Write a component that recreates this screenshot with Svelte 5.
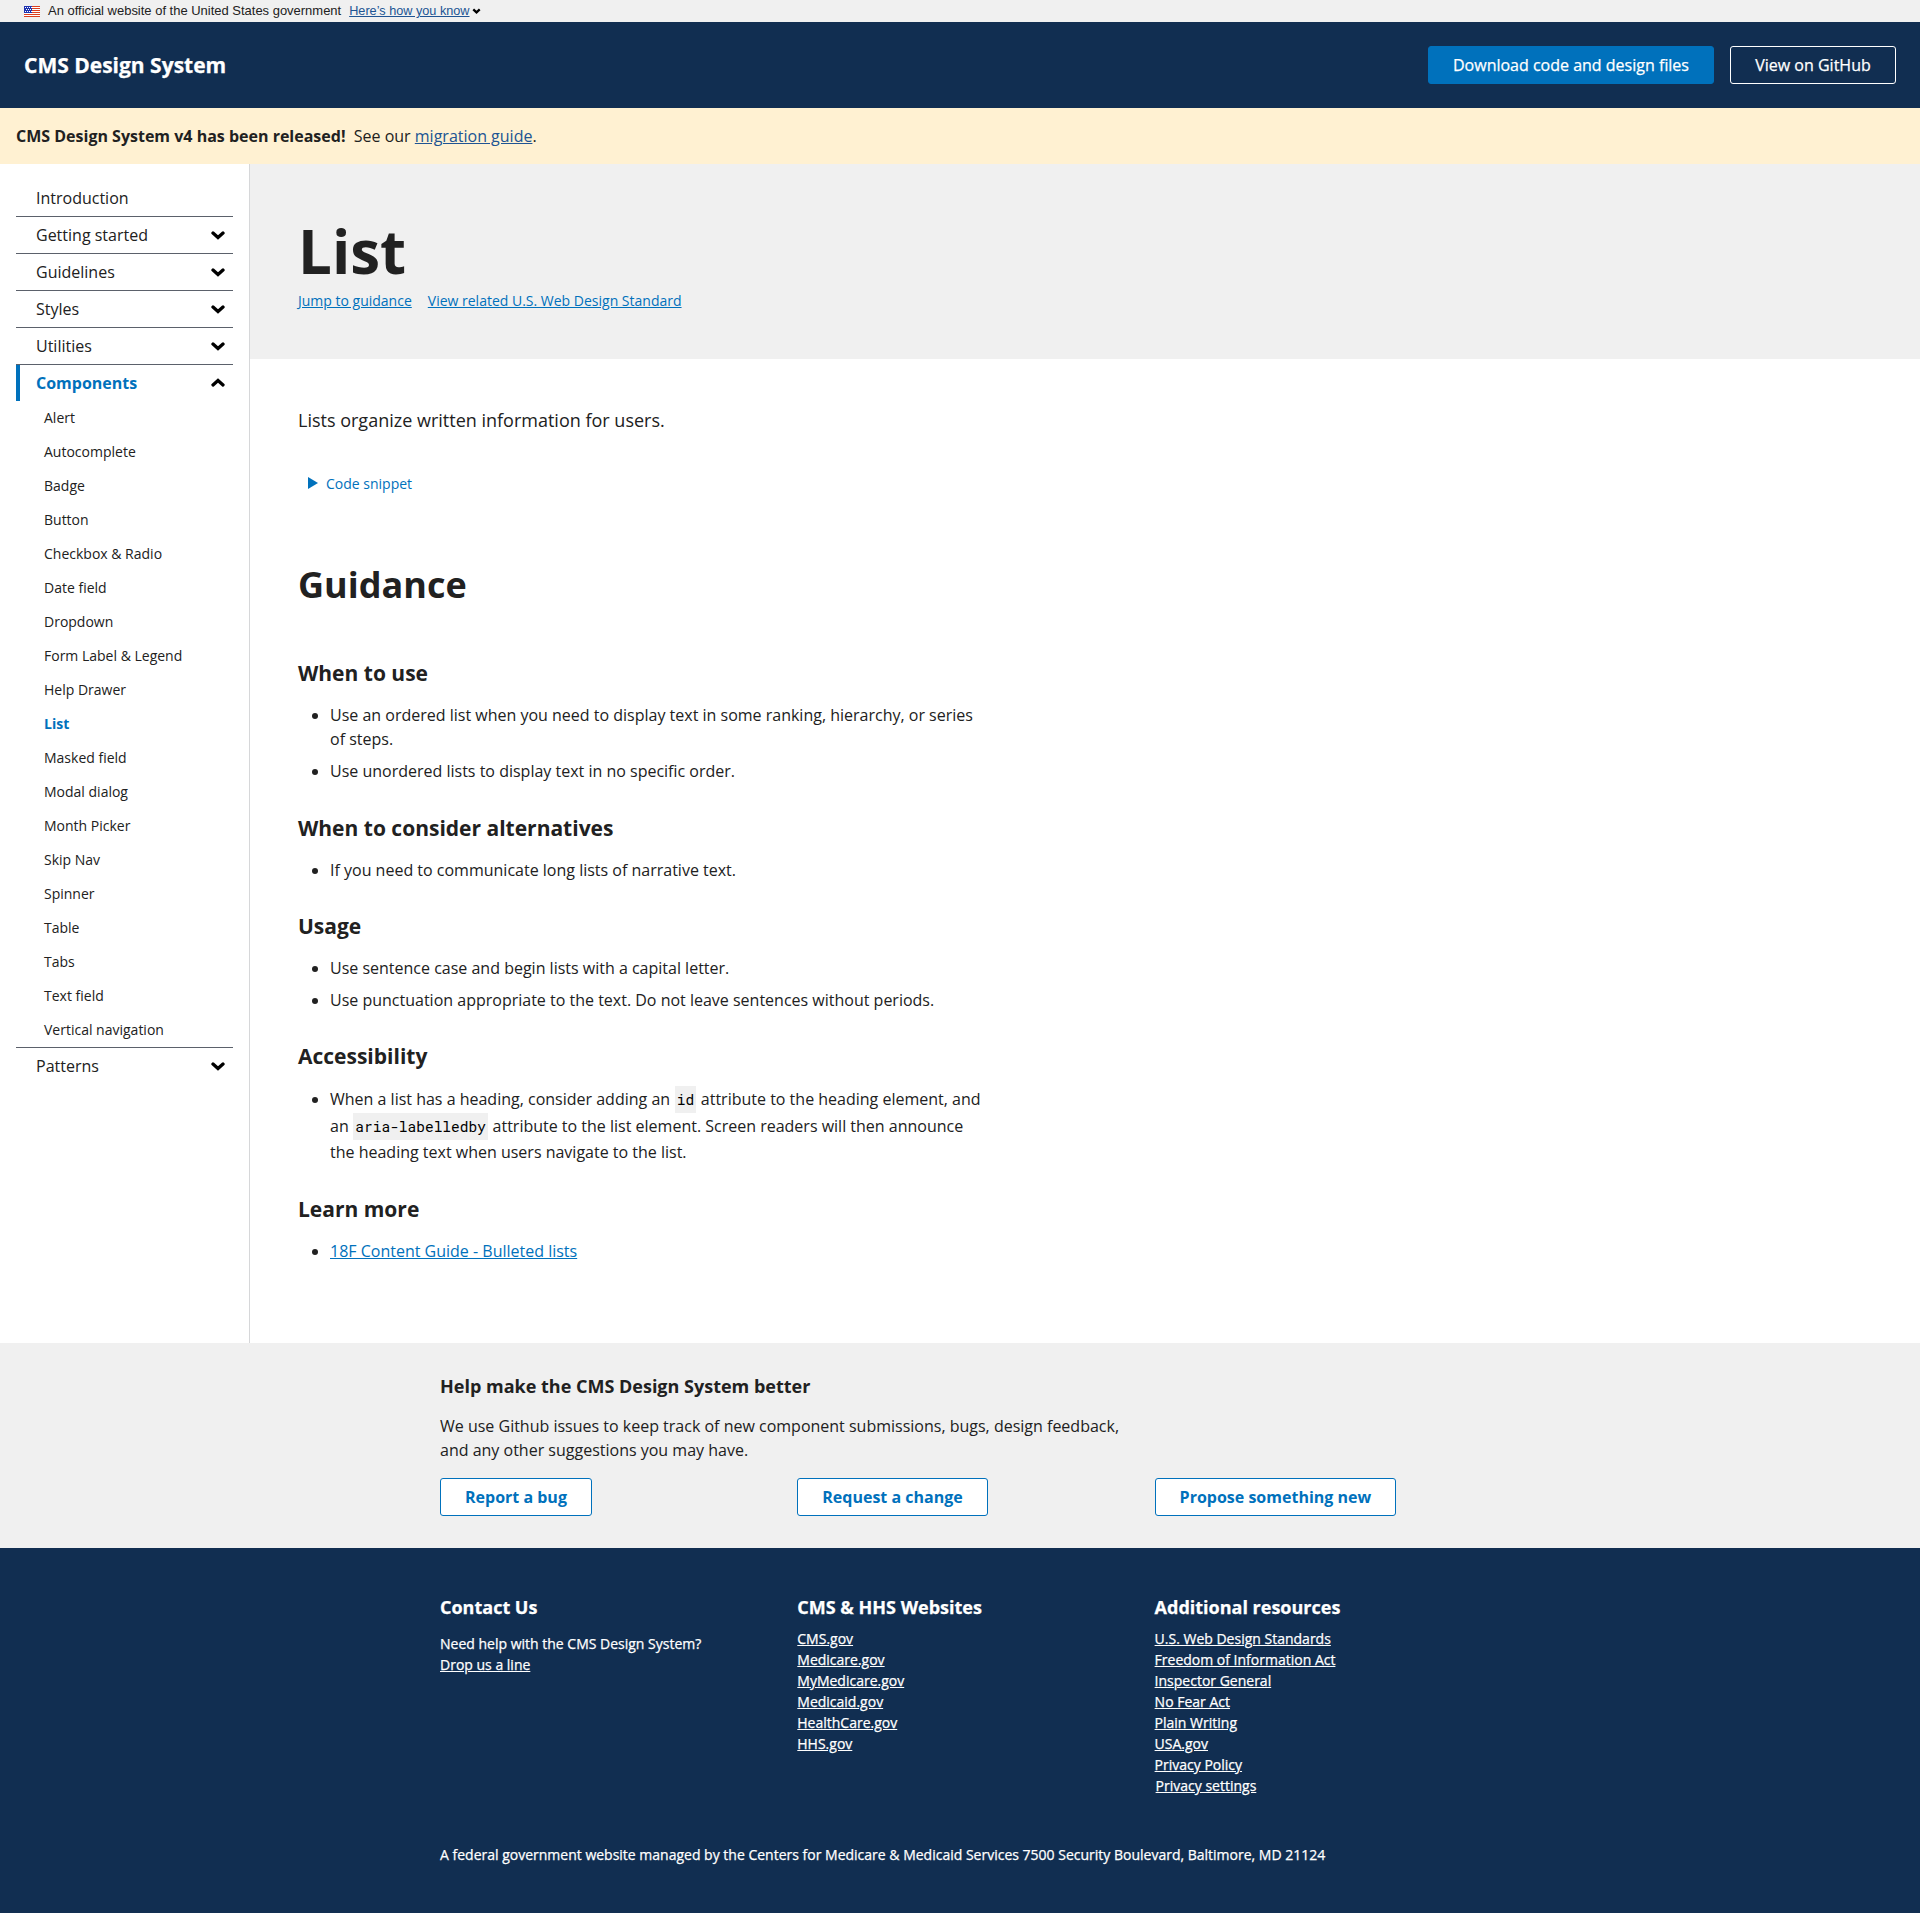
<script>
  const before = ['Getting started', 'Guidelines', 'Styles', 'Utilities'];
  const components = [
    'Alert', 'Autocomplete', 'Badge', 'Button', 'Checkbox & Radio', 'Date field',
    'Dropdown', 'Form Label & Legend', 'Help Drawer', 'List', 'Masked field',
    'Modal dialog', 'Month Picker', 'Skip Nav', 'Spinner', 'Table', 'Tabs',
    'Text field', 'Vertical navigation'
  ];
  const cms = ['CMS.gov', 'Medicare.gov', 'MyMedicare.gov', 'Medicaid.gov', 'HealthCare.gov', 'HHS.gov'];
  const resources = [
    'U.S. Web Design Standards', 'Freedom of Information Act', 'Inspector General',
    'No Fear Act', 'Plain Writing', 'USA.gov', 'Privacy Policy'
  ];
</script>

{#snippet chevron(open)}
  <svg class="chevron" class:open viewBox="0 0 14 9" aria-hidden="true">
    <path d="M2 2.1 7 6.6 12 2.1" />
  </svg>
{/snippet}

<div class="page">
  <div class="gov">
    <svg class="flag" viewBox="0 0 16 11" aria-hidden="true">
      <rect width="16" height="11" fill="#fff" />
      <path d="M0 .5h16M0 2.5h16M0 4.5h16M0 6.5h16M0 8.5h16M0 10.5h16" stroke="#db3e1f" />
      <rect width="8" height="7" fill="#1e33b1" />
      <path d="M1 1.5h7M2 3.5h6M1 5.5h7" stroke="#fff" stroke-dasharray="1 1" />
    </svg>
    <span class="official">An official website of the United States government</span>
    <a class="know" href="#top">Here’s how you know</a>
    <svg class="tiny" viewBox="0 0 14 9" aria-hidden="true"><path d="M2 2 7 6.6 12 2" /></svg>
  </div>

  <header>
    <div class="brand">CMS Design System</div>
    <div class="actions">
      <a class="btn primary" href="#top">Download code and design files</a>
      <a class="btn outline" href="#top">View on GitHub</a>
    </div>
  </header>

  <div class="notice">
    <b>CMS Design System v4 has been released!</b>&nbsp; See our <a href="#top">migration guide</a>.
  </div>

  <div class="body">
    <nav>
      <div class="item first"><span>Introduction</span></div>
      {#each before as label}
        <div class="item"><span>{label}</span>{@render chevron(false)}</div>
      {/each}
      <div class="item current"><span>Components</span>{@render chevron(true)}</div>
      <ul>
        {#each components as label}
          <li class:selected={label === 'List'}>{label}</li>
        {/each}
      </ul>
      <div class="item"><span>Patterns</span>{@render chevron(false)}</div>
    </nav>

    <main>
      <div class="hero">
        <h1>List</h1>
        <div class="jump">
          <a href="#top">Jump to guidance</a>
          <a href="#top">View related U.S. Web Design Standard</a>
        </div>
      </div>
      <article>
        <p class="lead">Lists organize written information for users.</p>
        <div class="snippet">
          <svg viewBox="0 0 10 12" aria-hidden="true"><path d="M0 0 10 6 0 12z" /></svg>
          <span>Code snippet</span>
        </div>
        <h2>Guidance</h2>
        <h3>When to use</h3>
        <ul>
          <li>Use an ordered list when you need to display text in some ranking, hierarchy, or series of steps.</li>
          <li>Use unordered lists to display text in no specific order.</li>
        </ul>
        <h3>When to consider alternatives</h3>
        <ul><li>If you need to communicate long lists of narrative text.</li></ul>
        <h3>Usage</h3>
        <ul>
          <li>Use sentence case and begin lists with a capital letter.</li>
          <li>Use punctuation appropriate to the text. Do not leave sentences without periods.</li>
        </ul>
        <h3>Accessibility</h3>
        <ul class="roomy">
          <li>When a list has a heading, consider adding an <code>id</code> attribute to the heading element, and an <code>aria-labelledby</code> attribute to the list element. Screen readers will then announce the heading text when users navigate to the list.</li>
        </ul>
        <h3>Learn more</h3>
        <ul><li><a href="#top">18F Content Guide - Bulleted lists</a></li></ul>
      </article>
    </main>
  </div>

  <section class="feedback">
    <div class="wrap">
      <h4>Help make the CMS Design System better</h4>
      <p>We use Github issues to keep track of new component submissions, bugs, design feedback, and any other suggestions you may have.</p>
      <div class="cols">
        <div><a class="btn ghost" href="#top">Report a bug</a></div>
        <div><a class="btn ghost" href="#top">Request a change</a></div>
        <div><a class="btn ghost" href="#top">Propose something new</a></div>
      </div>
    </div>
  </section>

  <footer>
    <div class="wrap">
      <div class="cols">
        <div class="contact">
          <h4>Contact Us</h4>
          <p>Need help with the CMS Design System?</p>
          <a href="#top">Drop us a line</a>
        </div>
        <div>
          <h4>CMS &amp; HHS Websites</h4>
          {#each cms as label}<a href="#top">{label}</a>{/each}
        </div>
        <div>
          <h4>Additional resources</h4>
          {#each resources as label}<a href="#top">{label}</a>{/each}
          <a class="settings" href="#top">Privacy settings</a>
        </div>
      </div>
      <p class="managed">A federal government website managed by the Centers for Medicare &amp; Medicaid Services 7500 Security Boulevard, Baltimore, MD 21124</p>
    </div>
  </footer>
</div>

<style>
  .page {
    width: 100%;
    min-height: 1913px;
    display: flex;
    flex-direction: column;
    background: #fff;
    color: #212121;
    font: 16px/24px 'Open Sans', sans-serif;
  }
  h1, h2, h3, h4, p, ul { margin: 0; padding: 0; }
  a { color: #0071bc; text-decoration: underline; }

  .gov {
    display: flex;
    align-items: center;
    height: 22px;
    padding: 0 24px;
    background: #f0f0f0;
    font: 12.97px/22px 'Liberation Sans', sans-serif;
  }
  .flag { width: 16px; height: 11px; margin: 1px 8px 0 0; shape-rendering: crispEdges; }
  .official { margin-right: 8px; }
  .know { color: #205493; font-size: 12.7px; }
  .tiny { width: 9px; height: 6px; margin: 0 0 0 2px; fill: none; stroke: #000; stroke-width: 3.6; }

  header {
    display: flex;
    align-items: center;
    justify-content: space-between;
    height: 86px;
    padding: 0 24px;
    background: #112e51;
  }
  .brand { color: #fff; font-size: 21px; font-weight: 700; }
  .actions { display: flex; gap: 16px; }
  .btn {
    display: inline-block;
    box-sizing: border-box;
    height: 38px;
    padding: 0 24px;
    border: 1px solid #0071bc;
    border-radius: 3px;
    line-height: 36px;
    text-align: center;
    text-decoration: none;
    white-space: nowrap;
  }
  .primary { width: 286px; background: #0071bc; color: #fff; }
  .outline { width: 166px; border-color: #fff; color: #fff; }
  .ghost { background: #fff; font-weight: 700; }
  /* Light text on dark grounds is thickened slightly for legibility. */
  header, footer { -webkit-text-stroke: .25px #fff; }

  .notice { height: 24px; padding: 16px; background: #fff1d2; }
  .notice a { color: #205493; }

  .body { display: flex; height: 1179px; }
  nav {
    box-sizing: border-box;
    width: 250px;
    padding: 16px 16px 0;
    border-right: 1px solid #d6d7d9;
  }
  .item {
    display: flex;
    align-items: center;
    justify-content: space-between;
    box-sizing: border-box;
    height: 37px;
    padding: 0 8px 0 20px;
    border-top: 1px solid #5b616b;
  }
  .item.first { height: 36px; border-top: 0; }
  .item.current {
    padding-left: 16px;
    background: linear-gradient(#0071bc, #0071bc) left / 4px 100% no-repeat;
    color: #0071bc;
    font-weight: 700;
  }
  .item.current span { margin-left: 4px; }
  .chevron { width: 14px; height: 9px; fill: none; stroke: #000; stroke-width: 3.3; stroke-linecap: round; }
  .open { margin-bottom: 1px; transform: rotate(180deg); }
  nav ul { list-style: none; }
  nav li { height: 34px; padding-left: 28px; font-size: 14px; line-height: 34px; }
  .selected { color: #0071bc; font-weight: 700; }

  main { flex: 1; }
  .hero { box-sizing: border-box; height: 195px; padding: 48px; background: #f0f0f0; }
  h1 { font-size: 60px; line-height: 78px; }
  .jump { display: flex; gap: 16px; font-size: 14px; line-height: 21px; }
  article { width: 688px; padding: 48px; }
  .lead { font-size: 18px; line-height: 27px; }
  .snippet {
    display: flex;
    align-items: center;
    gap: 8px;
    margin-top: 39px;
    padding-left: 10px;
    color: #0071bc;
    font-size: 14px;
    line-height: 21px;
  }
  .snippet svg { width: 10px; height: 12px; margin-top: -1px; fill: #0071bc; }
  h2 { margin: 67px 0 0; font-size: 36px; line-height: 47px; }
  h3 { margin-top: 31.4px; font-size: 21px; line-height: 27px; }
  h2 + h3 { margin-top: 52.3px; }
  article ul { margin-top: 16px; padding-left: 32px; }
  article li + li { margin-top: 8px; }
  .roomy { line-height: 26.5px; }
  .roomy + h3 { margin-top: 29.6px; }
  code {
    margin: 0 .5px;
    padding: 4px 2px;
    background: #f0f0f0;
    color: #000;
    font: 14.5px 'Roboto Mono', 'DejaVu Sans Mono', monospace;
  }

  .wrap { width: 1072px; margin-left: 440px; }
  .feedback { height: 205px; background: #f0f0f0; }
  h4 { font-size: 18px; line-height: 23px; }
  .feedback h4 { padding-top: 32px; }
  .feedback p { width: 700px; margin: 16px 0 16px; }
  .cols { display: grid; grid-template-columns: repeat(3, 357.3px); }

  footer { flex: 1; background: #112e51; color: #fff; font-size: 14px; line-height: 21px; }
  footer .wrap { padding-top: 48px; }
  footer h4 { margin-bottom: 9px; }
  footer .contact h4 { margin-bottom: 14px; }
  footer a { display: table; color: #fff; }
  .settings { margin-left: 1px; }
  .managed { margin-top: 48px; }
</style>
